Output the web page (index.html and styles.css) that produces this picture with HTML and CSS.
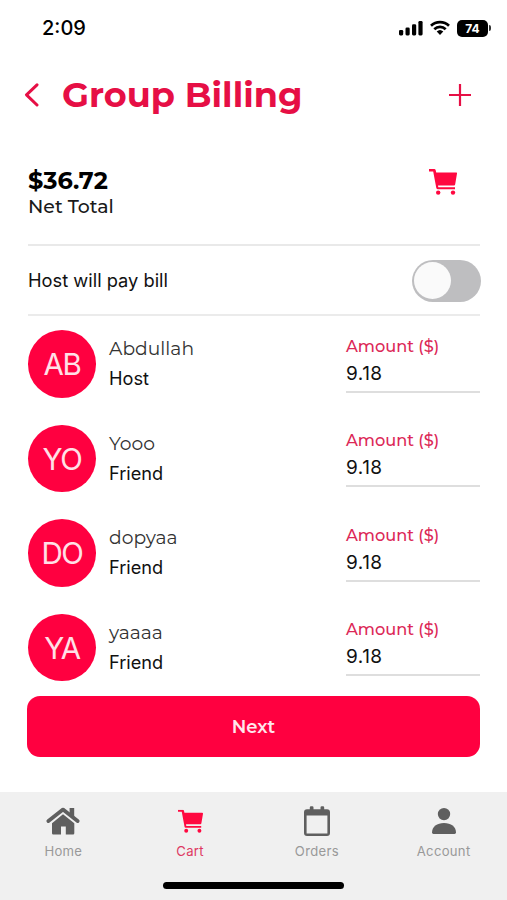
FILE: index.html
```html
<!DOCTYPE html>
<html lang="en">
<head>
<meta charset="utf-8">
<meta name="viewport" content="width=device-width">
<title>Group Billing</title>
<link rel="stylesheet" href="styles.css">
</head>
<body>
<svg width="0" height="0" class="defs" aria-hidden="true">
  <symbol id="cart" viewBox="0 0 28 26">
    <path d="M0 0H5.2Q6.4 0 6.7 1.2L7.2 3.4H27.2Q28.2 3.4 28 4.4L26.2 15.2Q26 16.4 25 16.4H9L9.3 18.2H26V20.2H8.6Q7.5 20.2 7.3 19.1L4.2 2.4H0Z"/>
    <circle cx="9.2" cy="23.6" r="2.2"/><circle cx="24" cy="23.6" r="2.2"/>
  </symbol>
</svg>
<div class="status">
  <span class="time">2:09</span>
  <div class="indicators">
    <svg width="24" height="16" viewBox="0 0 24 16"><rect x="0" y="10" width="4.2" height="5.4" rx="1.3"/><rect x="6.5" y="7.5" width="4.2" height="7.9" rx="1.3"/><rect x="13" y="4.2" width="4.2" height="11.2" rx="1.3"/><rect x="19.4" y="1" width="4.2" height="14.4" rx="1.3"/></svg>
    <svg width="20" height="16" viewBox="0 0 20 16"><path d="M1 5.7a13 13 0 0 1 18 0M4.3 9.2a8.2 8.2 0 0 1 11.4 0" fill="none" stroke="#000" stroke-width="2.7"/><path d="M10 15l-3.3-3.4a4.8 4.8 0 0 1 6.6 0z"/></svg>
    <div class="battery">74</div>
    <i class="battery-tip"></i>
  </div>
</div>
<header class="header">
  <svg class="back" width="15" height="24" viewBox="0 0 15 24"><path d="M13 1.8L2.5 11.8L13 22"/></svg>
  <h1>Group Billing</h1>
  <svg class="plus" width="22" height="22" viewBox="0 0 22 22"><path d="M11 0V22M0 11H22"/></svg>
</header>
<main>
  <section class="summary">
    <div><div class="total">$36.72</div><div class="caption">Net Total</div></div>
    <svg class="summary-cart" width="28" height="26"><use href="#cart"/></svg>
  </section>
  <section class="host-pays"><span>Host will pay bill</span><div class="toggle"><i></i></div></section>
  <ul class="members">
    <li><div class="avatar">AB</div><div class="person"><div class="name">Abdullah</div><div class="role">Host</div></div><div class="amount"><label>Amount ($)</label><div class="value">9.18</div></div></li>
    <li><div class="avatar">YO</div><div class="person"><div class="name">Yooo</div><div class="role">Friend</div></div><div class="amount"><label>Amount ($)</label><div class="value">9.18</div></div></li>
    <li><div class="avatar">DO</div><div class="person"><div class="name">dopyaa</div><div class="role">Friend</div></div><div class="amount"><label>Amount ($)</label><div class="value">9.18</div></div></li>
    <li><div class="avatar">YA</div><div class="person"><div class="name">yaaaa</div><div class="role">Friend</div></div><div class="amount"><label>Amount ($)</label><div class="value">9.18</div></div></li>
  </ul>
  <button class="next">Next</button>
</main>
<nav class="tabs">
  <div class="tab-row">
    <div class="tab"><svg width="34" height="32" viewBox="0 0 34 32"><path d="M2.4 16L17 4.6L31.6 16" fill="none" stroke="#5f5f5f" stroke-width="3.8" stroke-linecap="round" stroke-linejoin="round"/><path d="M23.6 3H28.2V13L23.6 9.4ZM17 9.3L28.3 18.2V28.2Q28.3 29.4 27.1 29.4H19.8V21.4H15V29.4H7.2Q6 29.4 6 28.2V18.2Z"/></svg><span>Home</span></div>
    <div class="tab active"><svg width="25" height="32" viewBox="0 0 25 32"><use href="#cart" x="0" y="4.7" width="25" height="23.2"/></svg><span>Cart</span></div>
    <div class="tab"><svg width="28" height="32" viewBox="0 0 28 32"><path fill-rule="evenodd" d="M4 4.3H6.8V2.4Q6.8 1.2 8 1.2H9.3Q10.5 1.2 10.5 2.4V4.3H17.5V2.4Q17.5 1.2 18.7 1.2H20Q21.2 1.2 21.2 2.4V4.3H24Q27 4.3 27 7.3V28Q27 31 24 31H4Q1 31 1 28V7.3Q1 4.3 4 4.3ZM3.6 10.4V28.4H24.4V10.4Z"/></svg><span>Orders</span></div>
    <div class="tab"><svg width="26" height="32" viewBox="0 0 26 32"><circle cx="13" cy="9.1" r="6.2"/><path d="M1 27.6C1 21.5 6 18 13 18S25 21.5 25 27.6Q25 29 23.6 29H2.4Q1 29 1 27.6Z"/></svg><span>Account</span></div>
  </div>
  <div class="home-indicator"></div>
</nav>
</body>
</html>
```
FILE: styles.css
```css
* { box-sizing: border-box; }
body { margin: 0; width: 507px; height: 900px; display: flex; flex-direction: column; background: #fff; color: #111; font-family: Inter, "Liberation Sans", sans-serif; overflow: hidden; }
svg { display: block; flex: none; }
.defs { position: absolute; }
.status { height: 56px; padding: 0 16px 0 42px; display: flex; align-items: center; justify-content: space-between; color: #000; }
.time { font-size: 20px; font-weight: 500; }
.indicators { display: flex; align-items: center; }
.indicators svg + svg { margin-left: 7px; }
.battery { margin-left: 7px; width: 31px; height: 17px; border-radius: 5px; background: #000; color: #fff; font-size: 12px; line-height: 17px; font-weight: 700; text-align: center; }
.battery-tip { width: 2px; height: 6px; margin-left: 1px; border-radius: 0 2px 2px 0; background: #333; }
.header { height: 78px; padding: 0 36px 0 24px; display: flex; align-items: center; color: #e60f45; }
.header path { fill: none; stroke: #e60f45; stroke-linecap: round; stroke-linejoin: round; }
.back path { stroke-width: 3; }
.plus { margin-left: auto; }
.plus path { stroke-width: 2.2; stroke-linecap: butt; }
h1 { margin: 0 0 0 23px; font-family: Montserrat, Inter, sans-serif; font-size: 35px; line-height: 44px; font-weight: 700; white-space: nowrap; }
main { padding: 0 27px 0 28px; }
.summary { height: 112px; padding-top: 33px; border-bottom: 2px solid #e9e9e9; display: flex; justify-content: space-between; color: #000; }
.total, .caption, .name, label, .next { font-family: Montserrat, Inter, sans-serif; }
.total { font-size: 24px; line-height: 28px; font-weight: 700; }
.caption { font-size: 18.9px; line-height: 24px; font-weight: 500; color: #1a1a1a; }
.summary-cart { margin: 2px 23px 0 0; fill: #ff0840; }
.host-pays { height: 70px; display: flex; align-items: center; justify-content: space-between; border-bottom: 2px solid #ebebeb; font-size: 18.3px; }
.toggle { width: 69px; height: 42px; margin: 1px -.5px 0 0; border-radius: 21px; padding: 2.5px; background: #bebec0; }
.toggle i { display: block; width: 37px; height: 37px; border-radius: 50%; background: #fafafa; }
.members { margin: 0; padding: 14px 0 0; list-style: none; display: flex; flex-direction: column; gap: 27px; }
li { height: 67.5px; display: flex; }
.avatar { width: 68px; height: 67.5px; border-radius: 50%; background: #ff0040; color: #ffe0e7; font-size: 29.5px; line-height: 68px; font-weight: 400; letter-spacing: -1.4px; text-align: center; }
.person { margin-left: 13px; padding-top: 4px; }
.name { font-size: 18.7px; line-height: 30px; font-weight: 400; color: #333; }
.role { font-size: 18.2px; line-height: 29px; }
.amount { width: 134px; height: 62.5px; margin-left: auto; border-bottom: 2px solid #dedede; }
label { display: block; padding-top: 2.5px; font-size: 16.2px; line-height: 26px; font-weight: 500; color: #dc2857; white-space: nowrap; }
.value { font-size: 19px; line-height: 29px; letter-spacing: .5px; }
.next { display: block; width: 453px; height: 61px; margin: 15px 0 0 -1px; border: 0; border-radius: 13px; background: #ff0040; color: #ffe6ec; font-size: 18px; font-weight: 600; }
.tabs { height: 108px; margin-top: auto; padding-top: 13px; background: #f0f0f0; }
.tab-row { display: grid; grid-template-columns: repeat(4, 1fr); height: 77px; }
.tab { display: flex; flex-direction: column; align-items: center; fill: #5f5f5f; color: #999; font-size: 13.1px; line-height: 18px; letter-spacing: .3px; }
.tab span { margin-top: 5px; }
.tab.active { fill: #ff0840; color: #de3862; }
.home-indicator { width: 181px; height: 7px; margin: 0 auto; border-radius: 4px; background: #000; }
```
